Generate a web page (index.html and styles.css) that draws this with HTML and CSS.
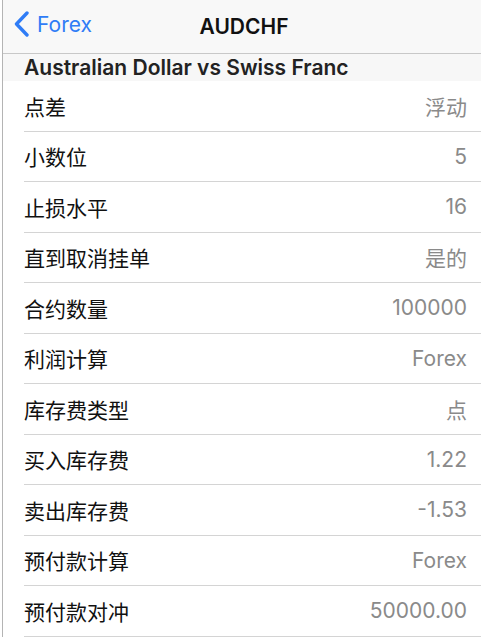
FILE: index.html
```html
<!DOCTYPE html>
<html lang="zh">

<head>
    <meta charset="UTF-8">
    <meta name="viewport" content="width=device-width, initial-scale=1.0">
    <title>AUDCHF</title>
    <link rel="stylesheet" href="styles.css">
</head>

<body>
    <div id="screen">
        <!-- Navigation Bar -->
        <div id="navBar">
            <a class="backLink" href="#">
                <svg class="chevron" width="17" height="26" viewBox="0 0 17 26">
                    <path d="M14 2 L3.5 13 L14 24" fill="none" stroke="#2f7cf6" stroke-width="3.4" stroke-linecap="round" stroke-linejoin="round"/>
                </svg>
                <span>Forex</span>
            </a>
            <div class="navTitle">AUDCHF</div>
        </div>

        <div class="sectionHeader">Australian Dollar vs Swiss Franc</div>

        <ul class="specList">
            <li><span class="label">点差</span><span class="value">浮动</span></li>
            <li><span class="label">小数位</span><span class="value">5</span></li>
            <li><span class="label">止损水平</span><span class="value">16</span></li>
            <li><span class="label">直到取消挂单</span><span class="value">是的</span></li>
            <li><span class="label">合约数量</span><span class="value">100000</span></li>
            <li><span class="label">利润计算</span><span class="value">Forex</span></li>
            <li><span class="label">库存费类型</span><span class="value">点</span></li>
            <li><span class="label">买入库存费</span><span class="value">1.22</span></li>
            <li><span class="label">卖出库存费</span><span class="value">-1.53</span></li>
            <li><span class="label">预付款计算</span><span class="value">Forex</span></li>
            <li><span class="label">预付款对冲</span><span class="value">50000.00</span></li>
        </ul>
    </div>
</body>

</html>
```

FILE: styles.css
```css
body {
    font-family: Inter, "Noto Sans CJK SC", sans-serif;
    margin: 0;
    padding: 0 0 0 2px;
    background-color: #fff;
    overflow: hidden;
}

#screen {
    border-left: 1px solid #b4b4b4;
    min-height: 637px;
}

#navBar {
    height: 53px;
    background-color: #f8f8f8;
    border-bottom: 1px solid #c8c8c8;
    display: flex;
    align-items: center;
    justify-content: center;
    position: relative;
}

.backLink {
    position: absolute;
    left: 10px;
    top: 11px;
    display: flex;
    align-items: center;
    gap: 7px;
    color: #2f7cf6;
    text-decoration: none;
    font-size: 21px;
}

.navTitle {
    font-size: 21px;
    font-weight: 600;
    color: #111;
    margin-left: 4px;
}

.sectionHeader {
    height: 27px;
    line-height: 28px;
    background-color: #f7f7f7;
    padding-left: 21px;
    font-size: 21px;
    font-weight: 600;
    color: #222;
}

.specList {
    list-style-type: none;
    margin: 0;
    padding: 0 0 0 21px;
}

.specList li {
    height: 49.5px;
    border-bottom: 1px solid #d4d4d4;
    display: flex;
    align-items: center;
    justify-content: space-between;
    padding-right: 14px;
    font-size: 21px;
}

.label {
    color: #111;
}

.value {
    color: #8a8a8a;
}
```
